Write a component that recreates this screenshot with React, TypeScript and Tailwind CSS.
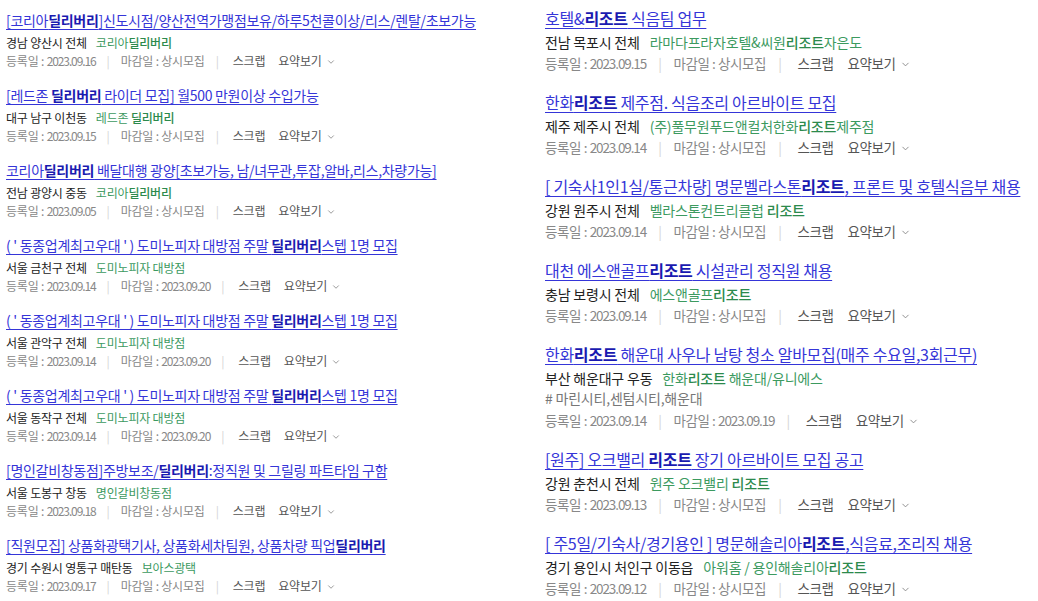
import React from "react";
import { ChevronDown } from "lucide-react";

type Job = {
  title: string;
  loc: string;
  company: string;
  tag?: string;
  reg: string;
  end: string;
};

const leftJobs: Job[] = [
  {
    title: "[코리아*딜리버리*]신도시점/양산전역가맹점보유/하루5천콜이상/리스/렌탈/초보가능",
    loc: "경남 양산시 전체",
    company: "코리아*딜리버리*",
    reg: "2023.09.16",
    end: "상시모집",
  },
  {
    title: "[레드존 *딜리버리* 라이더 모집] 월500 만원이상 수입가능",
    loc: "대구 남구 이천동",
    company: "레드존 *딜리버리*",
    reg: "2023.09.15",
    end: "상시모집",
  },
  {
    title: "코리아*딜리버리* 배달대행 광양[초보가능, 남/녀무관,투잡,알바,리스,차량가능]",
    loc: "전남 광양시 중동",
    company: "코리아*딜리버리*",
    reg: "2023.09.05",
    end: "상시모집",
  },
  {
    title: "( ' 동종업계최고우대 ' ) 도미노피자 대방점 주말 *딜리버리*스텝 1명 모집",
    loc: "서울 금천구 전체",
    company: "도미노피자 대방점",
    reg: "2023.09.14",
    end: "2023.09.20",
  },
  {
    title: "( ' 동종업계최고우대 ' ) 도미노피자 대방점 주말 *딜리버리*스텝 1명 모집",
    loc: "서울 관악구 전체",
    company: "도미노피자 대방점",
    reg: "2023.09.14",
    end: "2023.09.20",
  },
  {
    title: "( ' 동종업계최고우대 ' ) 도미노피자 대방점 주말 *딜리버리*스텝 1명 모집",
    loc: "서울 동작구 전체",
    company: "도미노피자 대방점",
    reg: "2023.09.14",
    end: "2023.09.20",
  },
  {
    title: "[명인갈비창동점]주방보조/*딜리버리*:정직원 및 그릴링 파트타임 구함",
    loc: "서울 도봉구 창동",
    company: "명인갈비창동점",
    reg: "2023.09.18",
    end: "상시모집",
  },
  {
    title: "[직원모집] 상품화광택기사, 상품화세차팀원, 상품차량 픽업*딜리버리*",
    loc: "경기 수원시 영통구 매탄동",
    company: "보아스광택",
    reg: "2023.09.17",
    end: "상시모집",
  },
];

const rightJobs: Job[] = [
  {
    title: "호텔&*리조트* 식음팀 업무",
    loc: "전남 목포시 전체",
    company: "라마다프라자호텔&씨원*리조트*자은도",
    reg: "2023.09.15",
    end: "상시모집",
  },
  {
    title: "한화*리조트* 제주점. 식음조리 아르바이트 모집",
    loc: "제주 제주시 전체",
    company: "(주)풀무원푸드앤컬처한화*리조트*제주점",
    reg: "2023.09.14",
    end: "상시모집",
  },
  {
    title: "[ 기숙사1인1실/통근차량] 명문벨라스톤*리조트*, 프론트 및 호텔식음부 채용",
    loc: "강원 원주시 전체",
    company: "벨라스톤컨트리클럽 *리조트*",
    reg: "2023.09.14",
    end: "상시모집",
  },
  {
    title: "대천 에스앤골프*리조트* 시설관리 정직원 채용",
    loc: "충남 보령시 전체",
    company: "에스앤골프*리조트*",
    reg: "2023.09.14",
    end: "상시모집",
  },
  {
    title: "한화*리조트* 해운대 사우나 남탕 청소 알바모집(매주 수요일,3회근무)",
    loc: "부산 해운대구 우동",
    company: "한화*리조트* 해운대/유니에스",
    tag: "# 마린시티,센텀시티,해운대",
    reg: "2023.09.14",
    end: "2023.09.19",
  },
  {
    title: "[원주] 오크밸리 *리조트* 장기 아르바이트 모집 공고",
    loc: "강원 춘천시 전체",
    company: "원주 오크밸리 *리조트*",
    reg: "2023.09.13",
    end: "상시모집",
  },
  {
    title: "[ 주5일/기숙사/경기용인 ] 명문해솔리아*리조트*,식음료,조리직 채용",
    loc: "경기 용인시 처인구 이동읍",
    company: "아워홈 / 용인해솔리아*리조트*",
    reg: "2023.09.12",
    end: "상시모집",
  },
];

// "*word*" marks the searched keyword
const Marked = ({ text, strong }: { text: string; strong: string }) => (
  <>
    {text.split("*").map((part, i) =>
      i % 2 === 1 ? (
        <b key={i} className={strong}>
          {part}
        </b>
      ) : (
        <span key={i}>{part}</span>
      )
    )}
  </>
);

// dates are set in narrow figures
const DateText = ({ value, big }: { value: string; big?: boolean }) =>
  /^\d/.test(value) ? (
    <span className={big ? "tracking-[-1.1px]" : "tracking-[-1.1px]"}>{value}</span>
  ) : (
    <span>{value}</span>
  );

const JobItem = ({ job, big }: { job: Job; big?: boolean }) => (
  <div className={big ? "pb-[17px]" : "pb-[15px]"}>
    <a
      href="#"
      className={
        big
          ? "block text-[16px] leading-[22px] text-[#3535d8] underline underline-offset-[3px] whitespace-nowrap tracking-[-0.3px]"
          : "block text-[14px] leading-[20px] text-[#3535d8] underline underline-offset-[3px] whitespace-nowrap tracking-[-0.3px]"
      }
    >
      <Marked text={job.title} strong="font-bold text-[#1a1ab0]" />
    </a>
    <div
      className={
        big
          ? "mt-[3px] flex gap-[10px] text-[14px] leading-[20px] tracking-[-0.2px]"
          : "mt-1 flex gap-[9px] text-[12px] leading-[18px] tracking-[-0.2px]"
      }
    >
      <span className="text-[#222]">{job.loc}</span>
      <span className="text-[#3c9a5f]">
        <Marked text={job.company} strong="font-medium text-[#2c8a4c]" />
      </span>
    </div>
    {job.tag && (
      <div className="text-[14px] leading-[21px] text-[#777] tracking-[-0.2px]">
        {job.tag}
      </div>
    )}
    <div
      className={
        big
          ? "flex items-center whitespace-pre text-[13.5px] leading-[22px] text-[#888] tracking-[-0.4px]"
          : "flex items-center whitespace-pre text-[12px] leading-[18px] text-[#888] tracking-[-0.2px]"
      }
    >
      <span>
        {"등록일 : "}
        <DateText value={job.reg} big={big} />
      </span>
      <span className={big ? "mx-[12px] text-[#d4d4d4]" : "mx-[11px] text-[#d4d4d4]"}>|</span>
      <span>
        {"마감일 : "}
        <DateText value={job.end} big={big} />
      </span>
      <span className={big ? "ml-[12px] mr-[16px] text-[#d4d4d4]" : "ml-[11px] mr-[14px] text-[#d4d4d4]"}>|</span>
      <span className="text-[#555]">스크랩</span>
      <span className={big ? "ml-[14px] text-[#555]" : "ml-[13px] text-[#555]"}>요약보기</span>
      <ChevronDown size={big ? 11 : 10} strokeWidth={2} className="ml-[4px] mt-[2px] text-[#888]" />
    </div>
  </div>
);

export default function App() {
  return (
    <div
      className="w-[1038px] h-[601px] overflow-hidden bg-white grid grid-cols-[545px_1fr]"
      style={{ fontFamily: '"Noto Sans CJK KR", "Noto Sans", sans-serif' }}
    >
      <div className="pl-[6px] pt-[10px]">
        {leftJobs.map((j, i) => (
          <JobItem key={i} job={j} />
        ))}
      </div>
      <div className="pt-[7px]">
        {rightJobs.map((j, i) => (
          <JobItem key={i} job={j} big />
        ))}
      </div>
    </div>
  );
}
